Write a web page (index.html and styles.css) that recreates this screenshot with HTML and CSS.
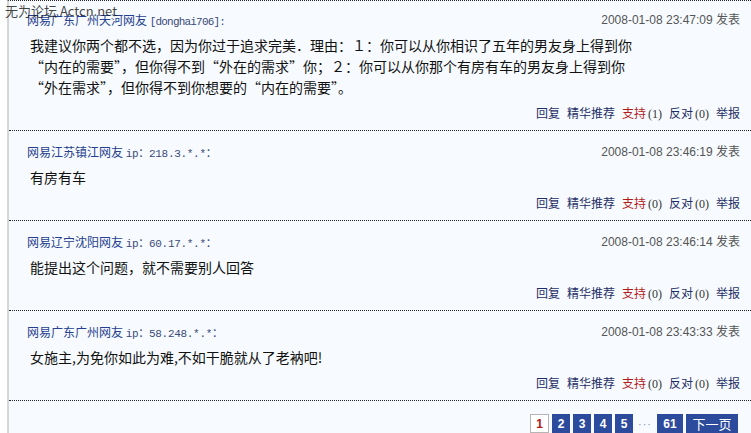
FILE: index.html
```html
<!DOCTYPE html>
<html lang="zh-CN">
<head>
<meta charset="utf-8">
<link rel="stylesheet" href="styles.css">
</head>
<body>
<div class="watermark">无为论坛 Actcn.net</div>
<div class="board">
  <div class="post first">
    <div class="head"><span class="author">网易广东广州天河网友 <span class="uid">[donghai706]:</span></span><span class="date">2008-01-08 23:47:09 发表</span></div>
    <div class="text">我建议你两个都不选，因为你过于追求完美．理由：１：你可以从你相识了五年的男友身上得到你<br>“内在的需要”，但你得不到“外在的需求”你；２：你可以从你那个有房有车的男友身上得到你<br>“外在需求”，但你得不到你想要的“内在的需要”。</div>
    <div class="actions"><a>回复</a><a>精华推荐</a><a class="up">支持</a><span class="n">(1)</span><a>反对</a><span class="n">(0)</span><a>举报</a></div>
  </div>
  <div class="post">
    <div class="head"><span class="author">网易江苏镇江网友 <span class="ip">ip：218.3.*.*：</span></span><span class="date">2008-01-08 23:46:19 发表</span></div>
    <div class="text">有房有车</div>
    <div class="actions"><a>回复</a><a>精华推荐</a><a class="up">支持</a><span class="n">(0)</span><a>反对</a><span class="n">(0)</span><a>举报</a></div>
  </div>
  <div class="post">
    <div class="head"><span class="author">网易辽宁沈阳网友 <span class="ip">ip：60.17.*.*：</span></span><span class="date">2008-01-08 23:46:14 发表</span></div>
    <div class="text">能提出这个问题，就不需要别人回答</div>
    <div class="actions"><a>回复</a><a>精华推荐</a><a class="up">支持</a><span class="n">(0)</span><a>反对</a><span class="n">(0)</span><a>举报</a></div>
  </div>
  <div class="post">
    <div class="head"><span class="author">网易广东广州网友 <span class="ip">ip：58.248.*.*：</span></span><span class="date">2008-01-08 23:43:33 发表</span></div>
    <div class="text">女施主,为免你如此为难,不如干脆就从了老衲吧!</div>
    <div class="actions"><a>回复</a><a>精华推荐</a><a class="up">支持</a><span class="n">(0)</span><a>反对</a><span class="n">(0)</span><a>举报</a></div>
  </div>
  <div class="pager">
    <span class="pg cur">1</span>
    <span class="pg">2</span>
    <span class="pg">3</span>
    <span class="pg">4</span>
    <span class="pg">5</span>
    <span class="dots">···</span>
    <span class="pg wide">61</span>
    <span class="pg next">下一页</span>
  </div>
</div>
</body>
</html>
```
FILE: styles.css
```css
html, body {
  margin: 0;
  padding: 0;
  background: #ffffff;
}
body {
  font-family: "Liberation Sans", "Noto Sans CJK SC", sans-serif;
  font-size: 12px;
  color: #000;
  overflow: hidden;
}
.watermark {
  position: absolute;
  left: 5px;
  top: 3px;
  font-family: "Noto Sans CJK SC", sans-serif;
  font-size: 13px;
  line-height: 16px;
  color: rgba(20, 20, 20, 0.8);
  z-index: 2;
}
.board {
  margin-left: 7px;
  border-left: 2px solid #d6d6d6;
  border-top: 1px dotted #222;
  background: #f7fbff;
  min-height: 440px;
}
.post {
  padding: 11px 11px 6px 18px;
  border-bottom: 1px dotted #222;
}
.post.first {
  padding-top: 9px;
}
.head {
  display: flex;
  justify-content: space-between;
  line-height: 20px;
  height: 20px;
}
.author {
  color: #24408e;
  font-family: "Noto Sans CJK SC", sans-serif;
}
.uid, .ip {
  font-family: "Liberation Mono", "Noto Sans CJK SC", monospace;
  font-size: 11px;
  letter-spacing: -0.8px;
  color: #3a4a78;
}
.ip {
  letter-spacing: -0.3px;
}
.date {
  color: #555;
}
.text {
  margin-top: 5px;
  padding-left: 3px;
  font-family: "Noto Sans CJK SC", sans-serif;
  font-size: 14px;
  line-height: 21px;
  color: #111;
}
.actions {
  margin-top: 5px;
  display: flex;
  justify-content: flex-end;
  align-items: baseline;
  line-height: 20px;
  font-family: "Noto Sans CJK SC", sans-serif;
  color: #1f2f66;
}
.actions a {
  color: #1f2f66;
  margin-left: 7px;
}
.actions a:first-child {
  margin-left: 0;
}
.actions a.up {
  color: #b21a1a;
}
.actions .n {
  font-family: "Liberation Serif", serif;
  color: #333;
  margin-left: 2px;
}
.pager {
  display: flex;
  justify-content: flex-end;
  align-items: center;
  gap: 3px;
  padding: 13px 13px 0 0;
}
.pg {
  display: inline-flex;
  align-items: center;
  justify-content: center;
  width: 18px;
  height: 19px;
  background: #2c4b9c;
  color: #fff;
  font-weight: bold;
  font-size: 12px;
  font-family: "Liberation Sans", "Noto Sans CJK SC", sans-serif;
  box-sizing: border-box;
}
.pg.cur {
  background: #fff;
  color: #a81c1c;
  border: 1px solid #b5b5b5;
  width: 19px;
}
.pg.wide {
  width: 26px;
}
.pg.next {
  width: 52px;
  font-weight: normal;
  font-size: 13px;
}
.dots {
  color: #8890a8;
  font-size: 11px;
  width: 18px;
  text-align: center;
  letter-spacing: 1px;
}
```
